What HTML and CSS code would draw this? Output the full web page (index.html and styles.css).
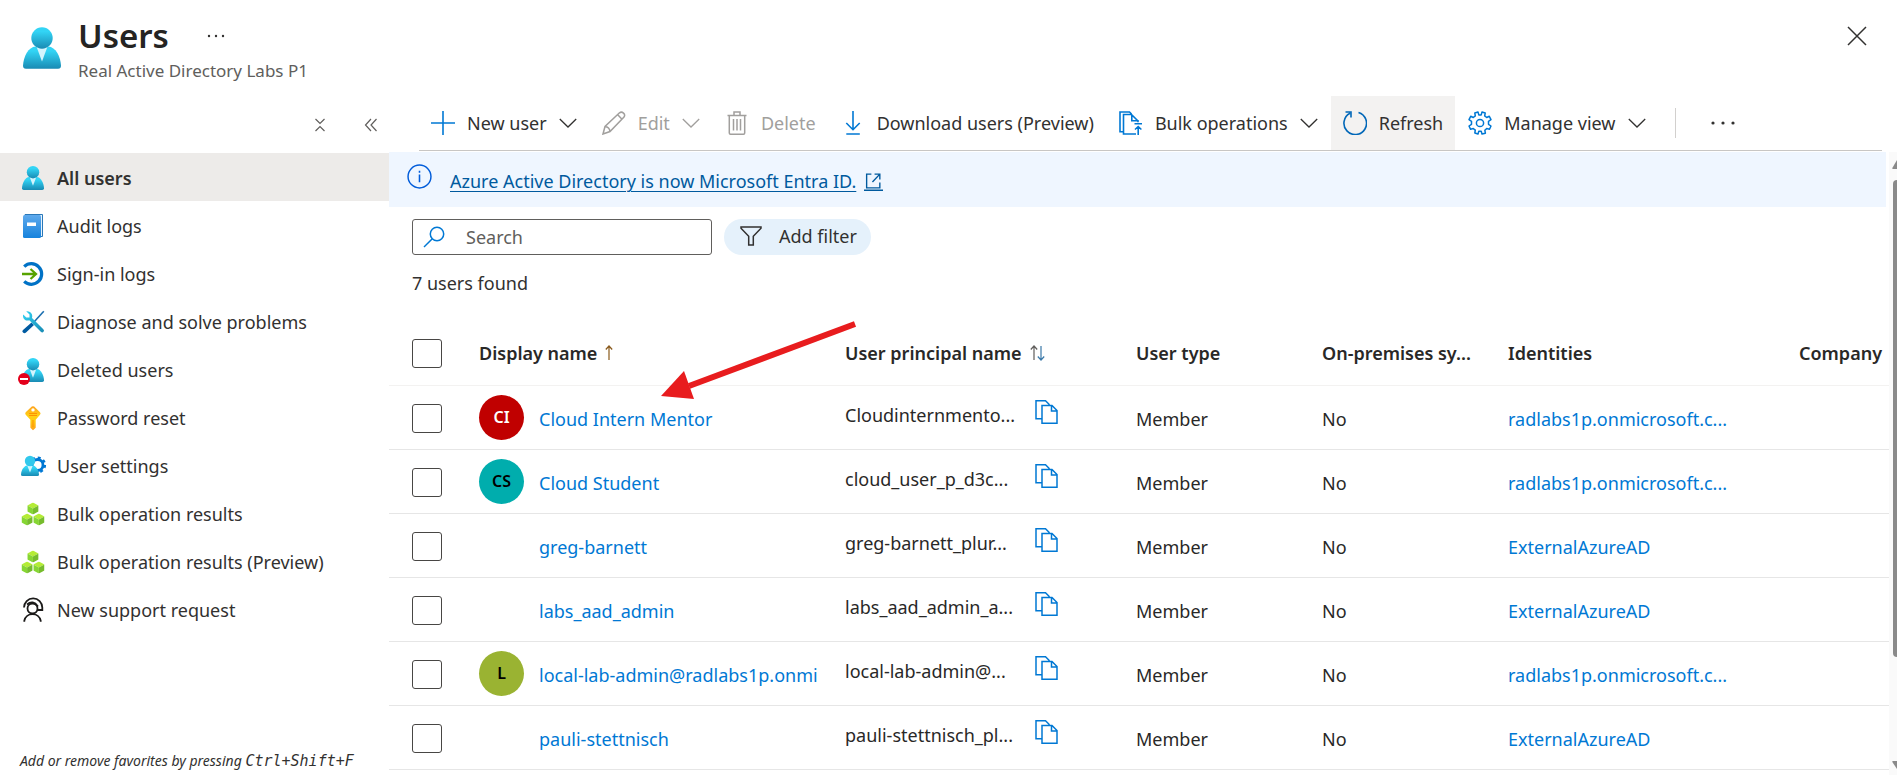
FILE: index.html
```html
<!DOCTYPE html>
<html lang="en">
<head>
<meta charset="utf-8">
<title>Users</title>
<link rel="stylesheet" href="styles.css">
</head>
<body>
<svg class="sprite" aria-hidden="true">
  <defs>
    <linearGradient id="g-person" x1="0" y1="0" x2="0" y2="1"><stop offset="0.2" stop-color="#32d4f5"/><stop offset="1" stop-color="#198ab3"/></linearGradient>
    <linearGradient id="g-book" x1="0" y1="0" x2="0" y2="1"><stop offset="0" stop-color="#5ea9ec"/><stop offset="1" stop-color="#1683dd"/></linearGradient>
    <linearGradient id="g-key" x1="0" y1="0" x2="0" y2="1"><stop offset="0" stop-color="#fea11b"/><stop offset="0.4" stop-color="#ffd016"/><stop offset="0.6" stop-color="#fc1"/><stop offset="1" stop-color="#fea11b"/></linearGradient>
    <linearGradient id="g-wrench" x1="0" y1="0" x2="1" y2="1"><stop offset="0" stop-color="#32d4f5"/><stop offset="1" stop-color="#198ab3"/></linearGradient>
    <symbol id="i-person" viewBox="0 0 22 24">
      <path d="M0 22.300C.2 17 3.200 11.300 7.300 11.100h7.400C18.800 11.300 21.800 17 22 22.300Q22 24 20.300 24H1.700Q0 24 0 22.300z" fill="url(#g-person)"/>
      <path d="M7.800 11.200h6.400L11 19.800z" fill="#d4f4fd"/>
      <circle cx="11" cy="6.200" r="6.200" fill="url(#g-person)"/>
    </symbol>
    <symbol id="i-cube" viewBox="0 0 12 13">
      <path d="M0 3.200 6 0l6 3.200L6 6.500z" fill="#b4ec36"/>
      <path d="M0 3.200 6 6.500V13L0 9.800z" fill="#86d633"/>
      <path d="M12 3.200 6 6.500V13l6-3.200z" fill="#76bc2d"/>
    </symbol>
    <symbol id="i-cubes" viewBox="0 0 24 24">
      <use href="#i-cube" x="6.200" y="0.500" width="11.500" height="12"/>
      <use href="#i-cube" x="0.500" y="11.500" width="11.200" height="12"/>
      <use href="#i-cube" x="12.300" y="11.500" width="11.200" height="12"/>
    </symbol>
    <symbol id="i-chevron" viewBox="0 0 18 18"><path d="M.8 5 9 13l8.200-8" fill="none" stroke="currentColor" stroke-width="1.300"/></symbol>
    <symbol id="i-copy" viewBox="0 0 24 24">
      <path d="M8 18.800H2V.8h9.500l4 4M8 5.500h10l5 5v12.700H8zM17.500 6v5H23" fill="none" stroke="#0078d4" stroke-width="1.500"/>
    </symbol>
  </defs>
</svg>

<div class="app">
  <header class="page-head">
    <svg class="head-icon" aria-hidden="true"><use href="#i-person"/></svg>
    <div class="head-text">
      <div class="title-row">
        <h1>Users</h1>
        <button class="icon-button" aria-label="More"><svg width="18" height="18" viewBox="0 0 18 18"><g fill="#323130"><circle cx="2" cy="9" r="1.200"/><circle cx="9" cy="9" r="1.200"/><circle cx="16" cy="9" r="1.200"/></g></svg></button>
      </div>
      <p class="subtitle">Real Active Directory Labs P1</p>
    </div>
    <button class="icon-button close" aria-label="Close"><svg width="20" height="20" viewBox="0 0 20 20"><path d="M1 1l18 18M19 1 1 19" stroke="#323130" stroke-width="1.500"/></svg></button>
  </header>

  <div class="columns">
    <aside class="sidebar">
      <div class="side-tools">
        <button class="icon-button" aria-label="Collapse all"><svg width="12" height="14" viewBox="0 0 12 14"><path d="M1.500 1 6 5.500 10.500 1M1.500 13 6 8.500 10.500 13" fill="none" stroke="#605e5c" stroke-width="1.200"/></svg></button>
        <button class="icon-button" aria-label="Collapse menu"><svg width="14" height="14" viewBox="0 0 14 14"><path d="M7 1 1.500 7 7 13M12.500 1 7 7l5.500 6" fill="none" stroke="#605e5c" stroke-width="1.200"/></svg></button>
      </div>
      <nav class="nav">
        <a href="#" class="nav-item current"><svg class="nav-icon"><use href="#i-person"/></svg>All users</a>
        <a href="#" class="nav-item"><svg class="nav-icon" viewBox="0 0 24 24"><path d="M4 .5h17.500v22H4z" fill="#e8f3fc" stroke="#2a78b8"/><rect x="2" y="1" width="18" height="23" rx="1.500" fill="url(#g-book)"/><rect x="6" y="8.500" width="9" height="3.500" fill="#fff"/></svg>Audit logs</a>
        <a href="#" class="nav-item"><svg class="nav-icon" viewBox="0 0 24 24"><path d="M3.200 4.600A10.300 10.300 0 1 1 3.200 19.400" fill="none" stroke="#0072c6" stroke-width="3.200"/><path d="M1 12h14M9.500 7l5.500 5-5.500 5" fill="none" stroke="#57a300" stroke-width="2.300"/></svg>Sign-in logs</a>
        <a href="#" class="nav-item"><svg class="nav-icon" viewBox="0 0 24 24"><path d="M22.800 1.200 13 12" stroke="#1b6fb0" stroke-width="1.600"/><path d="M10.500 12.500 13 15 5 22.500Q3.500 24 2 22.500T2 20z" fill="#005ba1"/><path d="M5.200 1.300 8.500 4.500v3H5.300L2.200 4.400C1.400 7 3 10.500 6.500 10.500q1 0 1.800-.3L19.800 21.800q1.500 1.300 2.700 0t-.2-2.500L11 8Q12 4 9 2 7.300 1 5.200 1.300z" fill="url(#g-wrench)"/></svg>Diagnose and solve problems</a>
        <a href="#" class="nav-item"><svg class="nav-icon" viewBox="0 0 24 24"><use href="#i-person" x="1" width="22" height="24"/><circle cx="3" cy="21" r="6" fill="#e3001b"/><path d="M-1 21h8" stroke="#fff" stroke-width="2"/></svg>Deleted users</a>
        <a href="#" class="nav-item"><svg class="nav-icon" viewBox="0 0 24 24"><path fill-rule="evenodd" d="M10.800.6Q12 0 13.200.6L19 6.300q1.200 1.200 0 2.400l-4.300 5v8L12 24.200l-2.600-2.500v-8L4.700 8.700q-1-1.200 0-2.400zM12 2.200a1.700 1.700 0 1 0 0 3.400 1.700 1.700 0 1 0 0-3.400z" fill="url(#g-key)"/><path d="M8 7.500h8M8 9.500h8" stroke="#ff9300" stroke-width="1"/><path d="M12 14v7" stroke="#ff9300"/></svg>Password reset</a>
        <a href="#" class="nav-item"><svg class="nav-icon" viewBox="0 0 24 24"><circle cx="16.500" cy="11" r="5.500" fill="none" stroke="#0078d4" stroke-width="2.800"/><circle cx="16.500" cy="11" r="7.300" fill="none" stroke="#0078d4" stroke-width="2.600" stroke-dasharray="2.870 2.870"/><path d="M0 20.500C.2 16 3 12 6 11.500h6c3 .5 5.800 4.500 6 9q0 1.500-1.500 1.500h-15Q0 22 0 20.500z" fill="url(#g-person)"/><path d="M6.400 12h5.200L9 18.500z" fill="#d4f4fd"/><circle cx="9" cy="7" r="5.200" fill="#32c8ec"/></svg>User settings</a>
        <a href="#" class="nav-item"><svg class="nav-icon"><use href="#i-cubes"/></svg>Bulk operation results</a>
        <a href="#" class="nav-item"><svg class="nav-icon"><use href="#i-cubes"/></svg>Bulk operation results (Preview)</a>
        <a href="#" class="nav-item"><svg class="nav-icon" viewBox="0 0 24 24"><g fill="none" stroke="#1b1a19" stroke-width="1.800"><circle cx="11.500" cy="10.500" r="5"/><path d="M3 9.500a9 9 0 0 1 18.300 0v2.500h-5M3.300 23.800v-1a8.400 8.400 0 0 1 16.400 0v1"/><path d="M6 6.500q6-5 11 2"/></g></svg>New support request</a>
      </nav>
      <p class="hint">Add or remove favorites by pressing <kbd>Ctrl+Shift+F</kbd></p>
    </aside>

    <main class="main">
      <div class="toolbar" role="toolbar" aria-label="User commands">
        <button class="command"><svg class="cmd-icon" viewBox="0 0 24 24"><path d="M12 0v24M0 12h24" stroke="#0078d4" stroke-width="1.600"/></svg>New user<svg class="chevron"><use href="#i-chevron"/></svg></button>
        <button class="command" disabled><svg class="cmd-icon" viewBox="0 0 24 24"><path d="M1 23l2-7.500L17.500 1.800q2-1.500 4 .3t.5 4L8 20.500zM3 15.500q4.500.5 5 5M15.500 3.500 20 8.200" fill="none" stroke="#a19f9d" stroke-width="1.500"/></svg>Edit<svg class="chevron"><use href="#i-chevron"/></svg></button>
        <button class="command" disabled><svg class="cmd-icon" viewBox="0 0 24 24"><path d="M2.500 4.500h19M9 4V1h6v3M4.300 4.500V22q0 1.200 1.200 1.200h13q1.200 0 1.200-1.200V4.500M8.500 8v11.500M12 8v11.500M15.500 8v11.500" fill="none" stroke="#a19f9d" stroke-width="1.500"/></svg>Delete</button>
        <button class="command"><svg class="cmd-icon" viewBox="0 0 24 24"><path d="M12 0v18.500M5.300 12l6.700 6.700 6.700-6.700M5.300 23h13.500" fill="none" stroke="#0078d4" stroke-width="1.600"/></svg>Download users (Preview)</button>
        <button class="command"><svg class="cmd-icon" viewBox="0 0 24 24"><path d="M4 20.800H1V1h9.500l2 2M17 23H4.500V3.500h8L19 10M12.800 3.500v6.300H19v1.500M15.500 12.800H23M19.200 24v-8M16 18.500l3.200-3 3.200 3" fill="none" stroke="#0078d4" stroke-width="1.600"/></svg>Bulk operations<svg class="chevron"><use href="#i-chevron"/></svg></button>
        <button class="command pressed"><svg class="cmd-icon" viewBox="0 0 24 24"><path d="M7 2.200A11.300 11.300 0 1 0 15.500 1.400M2.500 1H8v5.500" fill="none" stroke="#0067b8" stroke-width="1.600"/></svg>Refresh</button>
        <button class="command"><svg class="cmd-icon" viewBox="0 0 24 24"><path d="M10 1l.8 2.900h2.400L14 1l3.200 1-.5 2.900 2 1.600 2.600-1.200L23 8.600l-2.500 1.700v3L23 15l-1.500 3.300-2.800-.7-1.900 1.600.6 3L14 23l-.8-2.700h-2.400L10 23l-3.200-1 .5-2.800-2-1.600-2.700.7L1 15l2.500-1.700v-3L1 8.600l1.700-3.300 2.600 1.200 2-1.600L6.800 2z" fill="none" stroke="#0078d4" stroke-width="1.500" stroke-linejoin="round"/><circle cx="12" cy="12" r="3.600" fill="none" stroke="#0078d4" stroke-width="1.500"/></svg>Manage view<svg class="chevron"><use href="#i-chevron"/></svg></button>
        <span class="divider"></span>
        <button class="command" aria-label="More commands"><svg class="cmd-icon" viewBox="0 0 24 24"><g fill="#323130"><circle cx="2" cy="12" r="1.600"/><circle cx="12" cy="12" r="1.600"/><circle cx="22" cy="12" r="1.600"/></g></svg></button>
      </div>

      <div class="viewport">
        <div class="content">
          <div class="banner">
            <svg class="info" viewBox="0 0 24 24"><circle cx="12" cy="12" r="11" fill="none" stroke="#015cda" stroke-width="1.400"/><path d="M12 10v7.500M12 6.500v2" stroke="#015cda" stroke-width="1.500"/></svg>
            <a href="#" class="banner-link"><span>Azure Active Directory is now Microsoft Entra ID.</span><svg class="external" viewBox="0 0 18 18"><path d="M7 2H2.500v13H15V10M10 2h5v5M15 2 8 9.500M0 17.300h18" fill="none" stroke="currentColor" stroke-width="1.300"/></svg></a>
          </div>

          <div class="filters">
            <label class="search">
              <svg width="22" height="22" viewBox="0 0 22 22"><circle cx="14" cy="8" r="6.700" fill="none" stroke="#0078d4" stroke-width="1.500"/><path d="M9.300 12.800 1 21" stroke="#0078d4" stroke-width="1.500"/></svg>
              <input type="search" placeholder="Search" aria-label="Search">
            </label>
            <button class="pill"><svg width="22" height="20" viewBox="0 0 22 20"><path d="M1 1h20v1.200l-7.700 8V19H8.700v-8.800L1 2.200z" fill="none" stroke="#323130" stroke-width="1.500"/></svg>Add filter</button>
          </div>
          <p class="count">7 users found</p>

          <table class="users">
            <colgroup><col class="c-check"><col class="c-name"><col class="c-upn"><col class="c-type"><col class="c-type"><col class="c-upn"><col></colgroup>
            <thead>
              <tr>
                <th class="check"><input type="checkbox" aria-label="Select all"></th>
                <th>Display name<svg class="sort" width="8" height="16" viewBox="0 0 8 16"><path d="M4 1v14M.8 4.500 4 1l3.200 3.500" fill="none" stroke="#8a5a1c" stroke-width="1.200"/></svg></th>
                <th>User principal name<svg class="sort" width="15" height="16" viewBox="0 0 15 16"><path d="M4 1v14M.8 4.500 4 1l3.200 3.500" fill="none" stroke="#605e5c" stroke-width="1.200"/><path d="M11 1v14M7.800 11.500 11 15l3.200-3.500" fill="none" stroke="#3a78a8" stroke-width="1.200"/></svg></th>
                <th>User type</th>
                <th>On-premises sy...</th>
                <th>Identities</th>
                <th>Company</th>
              </tr>
            </thead>
            <tbody>
              <tr>
                <td class="check"><input type="checkbox" aria-label="Select Cloud Intern Mentor"></td>
                <td><div class="person"><span class="avatar red">CI</span><a href="#">Cloud Intern Mentor</a></div></td>
                <td><div class="upn"><span>Cloudinternmento...</span><button class="copy" aria-label="Copy"><svg><use href="#i-copy"/></svg></button></div></td>
                <td>Member</td><td>No</td><td><a href="#">radlabs1p.onmicrosoft.c...</a></td><td></td>
              </tr>
              <tr>
                <td class="check"><input type="checkbox" aria-label="Select Cloud Student"></td>
                <td><div class="person"><span class="avatar teal">CS</span><a href="#">Cloud Student</a></div></td>
                <td><div class="upn"><span>cloud_user_p_d3c...</span><button class="copy" aria-label="Copy"><svg><use href="#i-copy"/></svg></button></div></td>
                <td>Member</td><td>No</td><td><a href="#">radlabs1p.onmicrosoft.c...</a></td><td></td>
              </tr>
              <tr>
                <td class="check"><input type="checkbox" aria-label="Select greg-barnett"></td>
                <td><div class="person"><span class="avatar"></span><a href="#">greg-barnett</a></div></td>
                <td><div class="upn"><span>greg-barnett_plur...</span><button class="copy" aria-label="Copy"><svg><use href="#i-copy"/></svg></button></div></td>
                <td>Member</td><td>No</td><td><a href="#">ExternalAzureAD</a></td><td></td>
              </tr>
              <tr>
                <td class="check"><input type="checkbox" aria-label="Select labs_aad_admin"></td>
                <td><div class="person"><span class="avatar"></span><a href="#">labs_aad_admin</a></div></td>
                <td><div class="upn"><span>labs_aad_admin_a...</span><button class="copy" aria-label="Copy"><svg><use href="#i-copy"/></svg></button></div></td>
                <td>Member</td><td>No</td><td><a href="#">ExternalAzureAD</a></td><td></td>
              </tr>
              <tr>
                <td class="check"><input type="checkbox" aria-label="Select local-lab-admin"></td>
                <td><div class="person"><span class="avatar olive">L</span><a href="#">local-lab-admin@radlabs1p.onmi</a></div></td>
                <td><div class="upn"><span>local-lab-admin@...</span><button class="copy" aria-label="Copy"><svg><use href="#i-copy"/></svg></button></div></td>
                <td>Member</td><td>No</td><td><a href="#">radlabs1p.onmicrosoft.c...</a></td><td></td>
              </tr>
              <tr>
                <td class="check"><input type="checkbox" aria-label="Select pauli-stettnisch"></td>
                <td><div class="person"><span class="avatar"></span><a href="#">pauli-stettnisch</a></div></td>
                <td><div class="upn"><span>pauli-stettnisch_pl...</span><button class="copy" aria-label="Copy"><svg><use href="#i-copy"/></svg></button></div></td>
                <td>Member</td><td>No</td><td><a href="#">ExternalAzureAD</a></td><td></td>
              </tr>
            </tbody>
          </table>
          <svg class="pointer" width="196" height="80" viewBox="0 0 196 80" aria-hidden="true"><path d="M28 66 194 4" stroke="#e81c1e" stroke-width="6"/><path d="M0 76 23 51l10 28z" fill="#e81c1e"/></svg>
        </div>
        <div class="scrollbar" aria-hidden="true">
          <svg width="5" height="10" viewBox="0 0 5 10"><path d="M5 0v9H1Q0 9 .3 8z" fill="#8a8a8a"/></svg>
          <span class="thumb"></span>
          <svg width="5" height="10" viewBox="0 0 5 10"><path d="M5 9V1H1Q0 1 .3 2z" fill="#8a8a8a"/></svg>
        </div>
      </div>
    </main>
  </div>
</div>
</body>
</html>
```
FILE: styles.css
```css
* { box-sizing: border-box; }
body { margin: 0; background: #fff; color: #323130; font: 18px/24px "Noto Sans", "Open Sans", sans-serif; }
h1, p { margin: 0; }
a { color: #0078d4; text-decoration: none; }
button { font: inherit; color: inherit; border: 0; background: none; padding: 0; display: flex; align-items: center; }
svg { flex: none; display: block; }
.sprite { position: absolute; width: 0; height: 0; }

.app { height: 100vh; display: flex; flex-direction: column; overflow: hidden; }
.page-head { flex: none; height: 96px; display: flex; align-items: flex-start; padding: 12px 30px 0 23px; }
.head-icon { width: 38px; height: 42px; margin: 15px 17px 0 0; }
.head-text { flex: 1; }
.title-row { display: flex; align-items: center; gap: 38px; height: 47px; }
h1 { font-size: 33px; line-height: 47px; font-weight: 600; color: #252423; }
.subtitle { font-size: 17px; color: #605e5c; }
.close { margin-top: 14px; }

.columns { flex: 1; min-height: 0; display: flex; }
.sidebar { flex: none; width: 389px; display: flex; flex-direction: column; }
.side-tools { height: 57px; display: flex; justify-content: flex-end; align-items: center; gap: 38px; padding-right: 11px; }
.nav { flex: 1; }
.nav-item { display: flex; align-items: center; gap: 12px; height: 48px; padding: 2px 0 0 21px; color: #323130; }
.nav-item.current { background: #edebe9; font-weight: 600; }
.nav-icon { width: 24px; height: 24px; overflow: visible; }
.hint { padding: 0 0 2px 20px; font-size: 14px; font-style: italic; }
.hint kbd { font: italic 15px "DejaVu Sans Mono", monospace; }

.main { flex: 1; min-width: 0; display: flex; flex-direction: column; }
.toolbar { flex: none; display: flex; gap: 1px; height: 55px; margin: 0 15px 1px 30px; border-bottom: 1px solid #c8c6c4; }
.command { padding: 0 12px; gap: 12px; white-space: nowrap; }
.command:disabled { color: #a19f9d; }
.command.pressed { background: #f3f2f1; }
.cmd-icon { width: 24px; height: 24px; }
.chevron { width: 18px; height: 18px; }
.divider { width: 1px; height: 30px; margin: 12px 22px 0 16px; background: #d2d0ce; }

.viewport { flex: 1; min-height: 0; display: flex; }
.content { flex: 1; min-width: 0; overflow: hidden; position: relative; }
.banner { display: flex; gap: 18px; height: 55px; margin-right: 3px; padding: 12px 18px 0; background: #eff6ff; }
.info { width: 25px; height: 25px; }
.banner-link { display: flex; gap: 8px; color: #005a9e; padding-top: 5px; }
.banner-link span { text-decoration: underline; text-underline-offset: 3px; text-decoration-thickness: 1px; }
.external { width: 19px; height: 19px; margin-top: 3px; }

.filters { display: flex; gap: 12px; padding: 12px 23px 0; }
.search { width: 300px; height: 36px; display: flex; align-items: center; gap: 21px; padding-left: 10px; border: 1px solid #605e5c; border-radius: 3px; }
.search input { flex: 1; min-width: 0; border: 0; outline: 0; padding: 0; background: none; font: inherit; }
.search input::placeholder { color: #605e5c; opacity: 1; }
.pill { height: 36px; gap: 17px; padding: 0 14px 2px 16px; border-radius: 18px; background: #e5f1fb; }
.count { padding: 16px 23px 26px; }

.users { width: 100%; table-layout: fixed; border-collapse: collapse; color: #292827; }
.c-check { width: 78px; }
.c-name { width: 366px; }
.c-upn { width: 291px; }
.c-type { width: 186px; }
.users tr { height: 64px; border-bottom: 1px solid #e6e6e6; }
.users thead tr { border-bottom-color: #f3f2f1; }
.users th, .users td { padding: 0 0 0 12px; text-align: left; vertical-align: middle; white-space: nowrap; overflow: hidden; }
.users th { font-weight: 600; }
.users td { padding-top: 4px; }
.users .check { padding: 2px 0 0 23px; }
.check input { appearance: none; display: block; width: 30px; height: 29px; margin: 0; border: 1px solid #484644; border-radius: 3px; background: #fff; }
.sort { display: inline-block; margin-left: 8px; vertical-align: -1px; }
.person { display: flex; align-items: center; gap: 15px; }
.avatar { flex: none; width: 45px; height: 45px; margin-bottom: 4px; border-radius: 50%; display: flex; align-items: center; justify-content: center; font-size: 16px; font-weight: 600; color: #000; }
.avatar.red { background: #c00000; color: #fff; }
.avatar.teal { background: #00adad; }
.avatar.olive { background: #9ab332; }
.upn { display: flex; align-items: center; padding-bottom: 8px; }
.upn span { width: 189px; }
.copy { padding-bottom: 7px; }
.copy svg { width: 24px; height: 24px; }
.pointer { position: absolute; left: 272px; top: 168px; }

.scrollbar { flex: none; width: 8px; display: flex; flex-direction: column; align-items: flex-end; gap: 10px; padding: 8px 0 5px; background: #fafafa; }
.thumb { width: 4px; height: 477px; border-radius: 4px 0 0 4px; background: #8a8a8a; margin-bottom: auto; }
```
